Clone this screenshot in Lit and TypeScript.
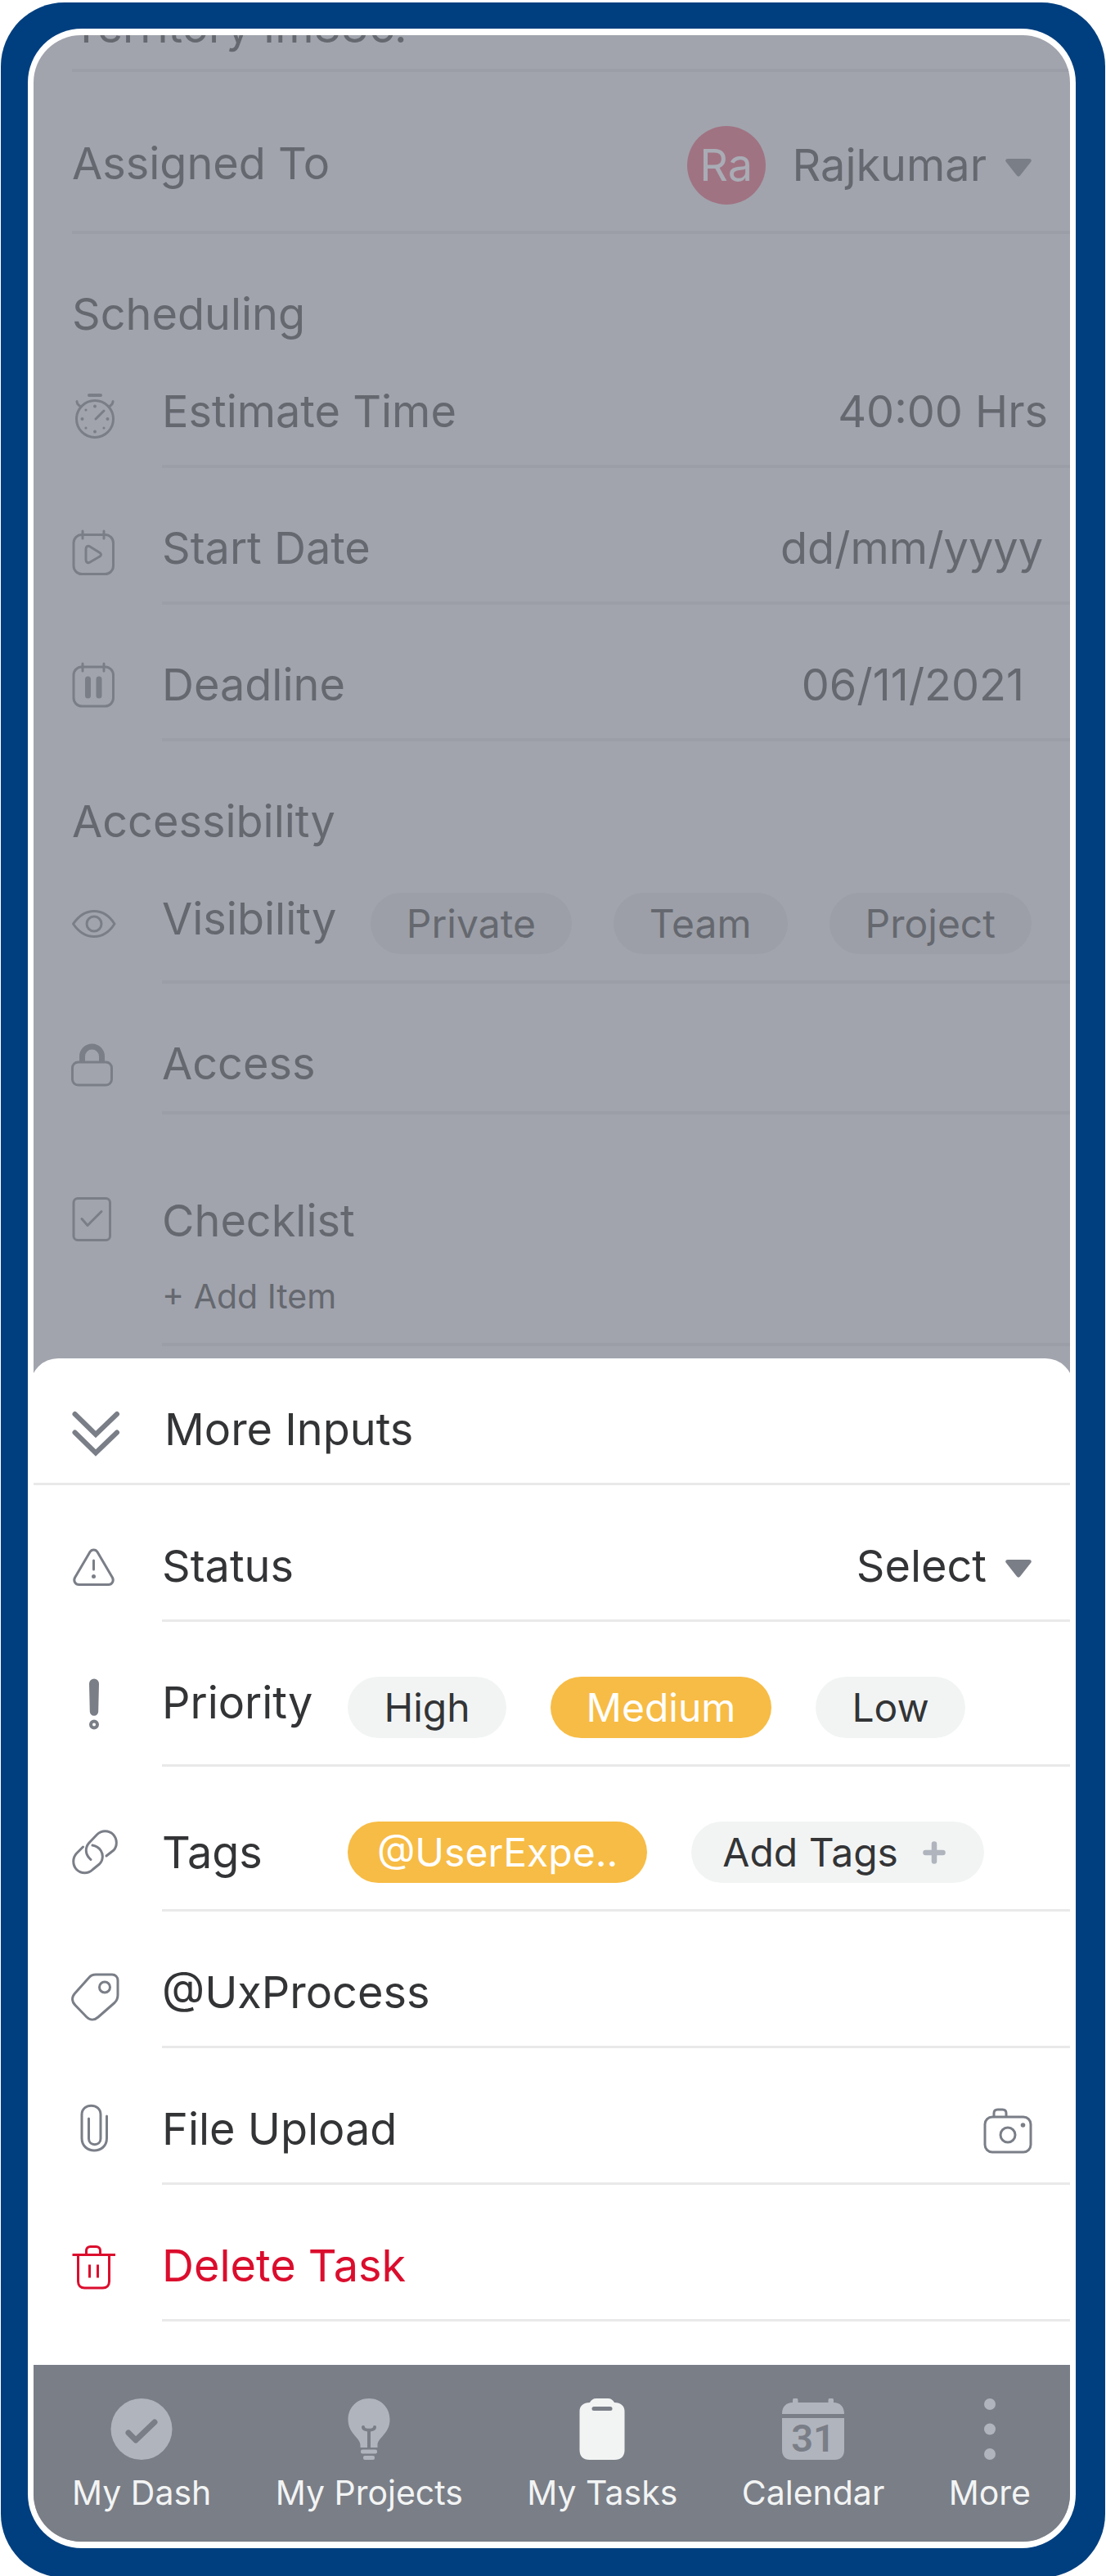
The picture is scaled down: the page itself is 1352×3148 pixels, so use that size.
import { LitElement, html, css, svg, nothing } from "lit";
import { customElement, property, state } from "lit/decorators.js";
import { classMap } from "lit/directives/class-map.js";

const ICONS: Record<string, unknown> = {
  stopwatch: svg`
    <circle cx="32" cy="41" r="22.500" />
    <path d="M25 12h14" stroke-width="4" />
    <path d="M10 19.500c0 3 2 5 5 6.500M54 19.500c0 3-2 5-5 6.500" />
    <path d="M33 41l10-10" />
    <g fill="currentColor" stroke="none">
      <circle cx="32" cy="25.500" r="2" /><circle cx="32" cy="56.500" r="2" />
      <circle cx="16.500" cy="41" r="2" /><circle cx="47.500" cy="41" r="2" />
      <circle cx="21" cy="30" r="1.600" /><circle cx="21" cy="52" r="1.600" />
      <circle cx="43" cy="52" r="1.600" />
    </g>`,
  calendarPlay: svg`
    <rect x="6" y="15.500" width="48.500" height="48" rx="10" />
    <path d="M17 11v9M43 11v9" />
    <path d="M21 33c0-3.500 2.500-4.500 5-3l12 7.500c2 1.500 2 3 0 4.500l-12 7c-2.500 1.500-5 .5-5-3z" />`,
  calendarPause: svg`
    <rect x="6" y="10" width="48.500" height="48" rx="10" />
    <path d="M17 6v9M43 6v9" />
    <path d="M23.500 25v20M37 25v20" stroke-width="7" />`,
  eye: svg`
    <path d="M5.500 38C13 27 22 22.500 31 22.500S49 27 56 38C49 49 40 53.500 31 53.500S13 49 5.500 38z" />
    <circle cx="31" cy="38" r="9" />`,
  lock: svg`
    <rect x="4.500" y="30" width="48" height="28" rx="7" />
    <path d="M16.500 30v-7a12 12 0 0 1 24 0v7" stroke-width="7" stroke-linecap="butt" />`,
  checklist: svg`
    <rect x="6" y="4.500" width="44.500" height="51" rx="5" />
    <path d="M16 29.500l7 8 17-17" />`,
  chevrons: svg`<path d="M7.500 13L33 38l26-25M7.500 35.500L33 60.500l26-25" stroke-width="6" stroke-linejoin="miter" />`,
  warning: svg`
    <path d="M26 14.500c2-3.500 7-3.500 9 0l18.500 31.500c2 4-.5 8.500-5 8.500h-36c-4.500 0-7-4.500-5-8.500z" />
    <path d="M30.500 25v11" />
    <circle cx="30.500" cy="44.500" r="2.500" fill="currentColor" stroke="none" />`,
  exclaim: svg`
    <path d="M25 8.500a6 6 0 0 1 12 0l-.8 34a5.200 5.200 0 0 1-10.400 0z" fill="currentColor" stroke="none" />
    <circle cx="31" cy="58.500" r="4" stroke-width="4" />`,
  link: svg`
    <path d="M27 40.500l-1.500-1.500a13.500 13.500 0 0 1-1-18.500l10-10.500a14 14 0 0 1 20 0c5 5.500 5 14 .5 19L46 36" />
    <path d="M29 23c9 1.500 14.500 9.500 11.500 18.500-.8 2-1.500 3-3 4.500l-8 6.500a14 14 0 0 1-20 0c-5-5.500-5-14 0-19.500l8-8" />`,
  tag: svg`
    <path d="M33 10h20c4 0 7 3 7 7v18c0 4-1.500 7-4 9.500L36 62c-4.500 4-10 4-14 0L8 47.500c-4.500-4.500-4.500-10-.5-14.500l17.500-19.500c2-2.500 4.500-3.500 8-3.500z" />
    <circle cx="44" cy="25.500" r="6.500" />`,
  clip: svg`
    <path d="M46.500 16v27c0 20-30.500 20-30.500 0V14c0-14.500 23-14.500 23 0v29.500c0 9.500-14.500 9.500-14.500 0V19" />`,
  trash: svg`
    <path d="M6 18.500h49.500M21.500 17.500v-4c0-3 2-5 5-5h7c3 0 5 2 5 5v4M11.500 19v32c0 5 3 8 8 8h22c5 0 8-3 8-8V19M25.500 32v13M35.500 32v13" stroke-linecap="square" />`,
  camera: svg`
    <rect x="4" y="17" width="56" height="43" rx="9" />
    <path d="M15 16.500v-4c0-3 1.500-4.500 4.500-4.500h6c3 0 4.500 1.500 4.500 4.500v4" />
    <circle cx="32" cy="39" r="9" />
    <circle cx="50.500" cy="27" r="2.800" fill="currentColor" stroke="none" />`,
  plus: svg`<path d="M32 8v48M8 32h48" stroke-width="15" />`,
};

const NAV_ICONS: Record<string, unknown> = {
  dash: svg`
    <circle cx="38" cy="37.500" r="37.500" />
    <path class="cut" d="M22 42l9 9 23-22" fill="none" stroke-width="7" />`,
  bulb: svg`
    <path d="M38 0c14.500 0 25.500 11 25.500 26 0 17-15 22-15 31v3h-21v-3c0-9-15-14-15-31C12.500 11 23.500 0 38 0z" />
    <path class="cut" d="M31 35c0 5 14 5 14 0M38 39v22" fill="none" stroke-width="4" />
    <rect x="28" y="62.500" width="20" height="5" rx="2" />
    <rect x="31" y="70" width="14" height="5" rx="2" />`,
  tasks: svg`
    <path d="M23 5c1.500-3 4-5 8-5h14c4 0 6.500 2 8 5 8 0 12.500 4 12.500 11v47c0 8-4.500 12-12 12h-31c-7.500 0-12-4-12-12V16c0-7 4.500-11 12.500-11z" />
    <path class="cut" d="M28 12.500h20" fill="none" stroke-width="5" />`,
  calendar: svg`
    <path d="M0 19c0-9 5-14 13-14V2.500a3 3 0 0 1 6.500 0V5h37V2.500a3 3 0 0 1 6.500 0V5c8 0 13 5 13 14z" />
    <path d="M0 24h76v39c0 8-4.500 12-12 12H12C4.500 75 0 71 0 63z" />
    <text class="cut-text" x="38" y="65" text-anchor="middle">31</text>`,
  more: svg`<circle cx="38" cy="7" r="7" /><circle cx="38" cy="37.500" r="7" /><circle cx="38" cy="68" r="7" />`,
};

const base = css`
  * {
    box-sizing: border-box;
  }
  button,
  select,
  input {
    margin: 0;
    padding: 0;
    border: 0;
    background: none;
    color: inherit;
    font: inherit;
    appearance: none;
  }
  button,
  select {
    cursor: pointer;
  }
`;

@customElement("task-icon")
export class TaskIcon extends LitElement {
  @property() name = "";
  static styles = css`
    :host {
      display: block;
      flex: none;
      width: var(--icon-size, 64px);
      height: var(--icon-size, 64px);
      color: var(--icon, #7a7e87);
    }
    svg {
      display: block;
      width: 100%;
      height: 100%;
      overflow: visible;
    }
  `;
  render() {
    return html`<svg viewBox="0 0 64 64" fill="none" stroke="currentColor" stroke-width="3"
      stroke-linecap="round" stroke-linejoin="round" aria-hidden="true">${ICONS[this.name]}</svg>`;
  }
}

@customElement("task-row")
export class TaskRow extends LitElement {
  @property() icon = "";
  static styles = [
    base,
    css`
      :host {
        display: flex;
        align-items: flex-start;
        gap: 50px;
        padding-left: 43px;
      }
      .body {
        flex: 1;
        min-width: 0;
        display: flex;
        align-items: var(--row-align, flex-start);
        padding: 0 var(--row-end, 47px) var(--row-bottom, 33px) 0;
        border-bottom: var(--rule-size) solid var(--rule);
      }
      .icon {
        display: flex;
        align-items: center;
        height: var(--lead-height, 64px);
      }
    `,
  ];
  render() {
    return html`
      ${this.icon ? html`<div class="icon"><task-icon name=${this.icon}></task-icon></div>` : nothing}
      <div class="body"><slot></slot></div>
    `;
  }
}

interface NavItem {
  id: string;
  label: string;
}

@customElement("app-root")
export class AppRoot extends LitElement {
  @state() private visibility = "";
  @state() private priority = "Medium";
  @state() private tab = "tasks";

  private nav: NavItem[] = [
    { id: "dash", label: "My Dash" },
    { id: "bulb", label: "My Projects" },
    { id: "tasks", label: "My Tasks" },
    { id: "calendar", label: "Calendar" },
    { id: "more", label: "More" },
  ];

  static styles = [
    base,
    css`
      :host {
        display: block;
        min-height: 100vh;
        padding: 3px 1px 0;
        overflow: hidden;
        background: #fff;
        font-family: Inter, "Liberation Sans", sans-serif;
        font-size: 54px;
        line-height: 64px;
        color: #333436;
      }
      .frame {
        margin-bottom: -2px;
        padding: 32px 36px 36px 33px;
        border-radius: 78px;
        background: #003f7f;
      }
      .bezel {
        padding: 8px 7px;
        border-radius: 66px;
        background: #fff;
      }
      .screen {
        overflow: hidden;
        border-radius: 58px;
        background: #a1a4ad;
      }
      .form {
        --rule: #9b9ea7;
        --rule-size: 4px;
        --row-top: 66px;
        --icon: #7a7e87;
        padding-bottom: 15px;
        color: #65686f;
      }
      .sheet {
        --rule: #e9e9e9;
        --rule-size: 3px;
        --row-top: 67px;
        --icon: #7a7e87;
        margin: 0 -4px;
        padding: 0 4px 53px;
        border-radius: 34px 34px 0 0;
        background: #fff;
      }
      h2 {
        margin: 0;
        font: inherit;
      }
      .plain {
        display: flex;
        margin-left: 47px;
        padding-right: 47px;
        border-bottom: 4px solid var(--rule);
      }
      .summary {
        align-items: flex-end;
        height: 45px;
        padding-bottom: 19px;
      }
      .assigned {
        align-items: center;
        padding-top: 66px;
        padding-bottom: 32px;
      }
      .assigned .label {
        padding-bottom: 4px;
      }
      .section {
        padding: 66px 47px 0;
      }
      task-row {
        padding-top: var(--row-top);
      }
      .section + task-row {
        padding-top: 55px;
      }
      .chip-row {
        --row-bottom: 32px;
      }
      .tag-row {
        --row-align: center;
        --lead-height: 75px;
      }
      .access-row {
        --row-bottom: 26px;
      }
      .checklist-row {
        --row-bottom: 32px;
        padding-top: 98px;
      }
      .delete-row {
        --icon: #db0d2d;
        color: #db0d2d;
      }
      .head {
        display: flex;
        align-items: center;
        gap: 53px;
        width: 100%;
        padding: 55px 43px 33px;
        border-bottom: 3px solid var(--rule);
        text-align: left;
      }
      .label {
        flex: none;
      }
      .lead {
        min-width: 184px;
        margin-right: 43px;
      }
      .stack {
        display: flex;
        flex-direction: column;
        align-items: flex-start;
        gap: 35px;
      }
      .small {
        font-size: 41px;
        line-height: 50px;
      }
      .value {
        flex: 1;
        min-width: 0;
        height: 64px;
        text-align: right;
      }
      .value::placeholder {
        color: inherit;
        opacity: 1;
      }
      .wide {
        --row-end: 27px;
      }
      .wider {
        --row-end: 33px;
      }
      .inset {
        --row-end: 56px;
      }
      .upload {
        --row-end: 44px;
      }
      .pick {
        display: flex;
        align-items: center;
        margin-left: auto;
      }
      .pick select {
        height: 64px;
        field-sizing: content;
        text-align-last: right;
      }
      .pick select option {
        font-size: 32px;
      }
      .caret {
        width: 32px;
        height: 22px;
        margin: 6px 0 0 23px;
        fill: #7a7e87;
        pointer-events: none;
      }
      .avatar {
        display: flex;
        align-items: center;
        justify-content: center;
        width: 96px;
        height: 96px;
        margin-right: 33px;
        border-radius: 50%;
        background: #a07382;
        color: #a9acb5;
      }
      .chips {
        display: flex;
        gap: 54px;
      }
      .chip {
        display: flex;
        align-items: center;
        height: 75px;
        padding: 0 44px;
        border-radius: 38px;
        background: #f2f4f4;
        font-size: 48px;
        line-height: 75px;
        white-space: nowrap;
      }
      .chip.tag {
        padding: 0 36px;
      }
      .chip.add {
        gap: 30px;
        padding: 0 47px 0 38px;
      }
      .chip.on {
        background: #f7bc45;
        color: #fff;
      }
      .form .chips {
        gap: 51px;
        margin-left: auto;
      }
      .form .chip {
        background: #9c9fa7;
      }
      .form .chip.on {
        background: #7a7e87;
      }
      .plus {
        --icon-size: 28px;
        --icon: #b0b4bd;
      }
      .push {
        margin-left: auto;
      }
      .tabs {
        display: flex;
        justify-content: space-between;
        padding: 41px 48px 35px 47px;
        background: #7a7e87;
      }
      .tab {
        display: flex;
        flex-direction: column;
        align-items: center;
        gap: 15px;
        color: #f2f4f4;
      }
      .tab svg {
        display: block;
        width: 76px;
        height: 75px;
        fill: #b0b4bd;
      }
      .tab.current svg {
        fill: #f2f4f4;
      }
      .cut {
        stroke: #7a7e87;
        stroke-linecap: round;
        stroke-linejoin: round;
      }
      .cut-text {
        fill: #7a7e87;
        font-family: Roboto, sans-serif;
        font-size: 47px;
        font-weight: 600;
      }
    `,
  ];

  private caret() {
    return html`<svg class="caret" viewBox="0 0 32 22" aria-hidden="true">
      <path d="M3 0h26c2.500 0 3.500 2 2 4L18 20.500c-1.200 1.500-2.800 1.500-4 0L1 4C-.5 2 .5 0 3 0z" />
    </svg>`;
  }

  private chips(group: string, names: string[], current: string, pick: (name: string) => void) {
    return html`<div class="chips" role="group" aria-label=${group}>
      ${names.map(
        (name) => html`<button
          class=${classMap({ chip: true, on: name === current })}
          aria-pressed=${name === current ? "true" : "false"}
          @click=${() => pick(name)}
        >${name}</button>`
      )}
    </div>`;
  }

  render() {
    return html`
      <div class="frame">
        <div class="bezel">
          <main class="screen">
            <section class="form">
              <div class="plain summary"><span class="label">Territory Im886.</span></div>
              <div class="plain assigned">
                <label class="label" for="assignee">Assigned To</label>
                <div class="pick">
                  <span class="avatar" aria-hidden="true">Ra</span>
                  <select id="assignee"><option>Rajkumar</option></select>
                  ${this.caret()}
                </div>
              </div>

              <h2 class="section">Scheduling</h2>
              <task-row class="wide" icon="stopwatch">
                <label class="label" for="estimate">Estimate Time</label>
                <input class="value" id="estimate" type="text" .value=${"40:00 Hrs"} />
              </task-row>
              <task-row class="wider" icon="calendarPlay">
                <label class="label" for="start">Start Date</label>
                <input class="value" id="start" type="text" placeholder="dd/mm/yyyy" />
              </task-row>
              <task-row class="inset" icon="calendarPause">
                <label class="label" for="deadline">Deadline</label>
                <input class="value" id="deadline" type="text" .value=${"06/11/2021"} />
              </task-row>

              <h2 class="section">Accessibility</h2>
              <task-row class="chip-row" icon="eye">
                <span class="label">Visibility</span>
                ${this.chips("Visibility", ["Private", "Team", "Project"], this.visibility, (v) => (this.visibility = v))}
              </task-row>
              <task-row class="access-row" icon="lock"><span class="label">Access</span></task-row>
              <task-row class="checklist-row" icon="checklist">
                <div class="stack">
                  <span class="label">Checklist</span>
                  <button class="small">+ Add Item</button>
                </div>
              </task-row>
            </section>

            <section class="sheet">
              <button class="head"><task-icon name="chevrons"></task-icon>More Inputs</button>
              <task-row icon="warning">
                <label class="label" for="status">Status</label>
                <div class="pick">
                  <select id="status"><option>Select</option></select>
                  ${this.caret()}
                </div>
              </task-row>
              <task-row class="chip-row" icon="exclaim">
                <span class="label lead">Priority</span>
                ${this.chips("Priority", ["High", "Medium", "Low"], this.priority, (v) => (this.priority = v))}
              </task-row>
              <task-row class="chip-row tag-row" icon="link">
                <span class="label lead">Tags</span>
                <div class="chips">
                  <button class="chip tag on">@UserExpe..</button>
                  <button class="chip add">Add Tags<task-icon class="plus" name="plus"></task-icon></button>
                </div>
              </task-row>
              <task-row icon="tag"><span class="label">@UxProcess</span></task-row>
              <task-row class="upload" icon="clip">
                <span class="label">File Upload</span>
                <button class="push" aria-label="Take photo"><task-icon name="camera"></task-icon></button>
              </task-row>
              <task-row class="delete-row" icon="trash"><button class="label">Delete Task</button></task-row>
            </section>

            <nav class="tabs">
              ${this.nav.map(
                (item) => html`<button
                  class=${classMap({ tab: true, current: item.id === this.tab })}
                  @click=${() => (this.tab = item.id)}
                >
                  <svg viewBox="0 0 76 75" aria-hidden="true">${NAV_ICONS[item.id]}</svg>
                  <span class="small">${item.label}</span>
                </button>`
              )}
            </nav>
          </main>
        </div>
      </div>
    `;
  }
}
